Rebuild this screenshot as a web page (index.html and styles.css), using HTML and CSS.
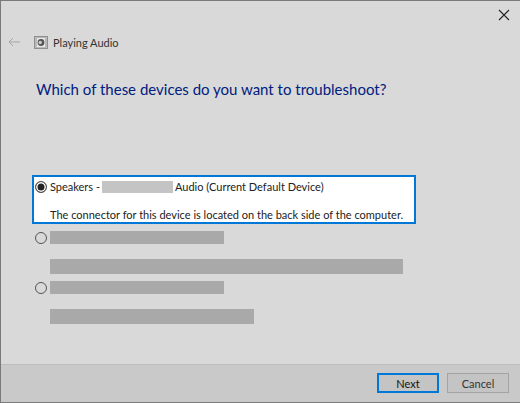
FILE: index.html
```html
<!DOCTYPE html>
<html lang="en">
<head>
    <meta charset="UTF-8">
    <title>Playing Audio</title>
    <link rel="stylesheet" href="styles.css">
</head>
<body>
    <div class="window">
        <div class="titlebar">
            <svg class="close" width="12" height="12" viewBox="0 0 12 12"><path d="M1 1L11 11M11 1L1 11" stroke="#222" stroke-width="1.1" fill="none"/></svg>
        </div>
        <div class="nav">
            <svg class="back" width="13" height="10" viewBox="0 0 13 10"><path d="M12 5H1M5 1L1 5L5 9" stroke="#a6a6a6" stroke-width="1" fill="none"/></svg>
            <svg class="app-icon" width="14" height="13" viewBox="0 0 14 13">
                <rect x="0.5" y="0.5" width="13" height="12" fill="#b9b9b9" stroke="#8f8f8f"/>
                <rect x="3" y="2" width="8" height="9" fill="#e6e6e6"/>
                <circle cx="7" cy="6.5" r="3.4" fill="#555"/>
                <circle cx="6.2" cy="6.5" r="1.7" fill="#c9c9c9"/>
            </svg>
            <span class="nav-title">Playing Audio</span>
        </div>
        <h1>Which of these devices do you want to troubleshoot?</h1>
        <div class="devices">
            <div class="device selected">
                <div class="device-line">
                    <span class="radio checked"></span>
                    <span>Speakers -</span>
                    <span class="mask-light"></span>
                    <span>Audio (Current Default Device)</span>
                </div>
                <p class="device-note">The connector for this device is located on the back side of the computer.</p>
            </div>
            <div class="device">
                <div class="device-line">
                    <span class="radio"></span>
                    <span class="mask name"></span>
                </div>
                <div class="mask note note-long"></div>
            </div>
            <div class="device">
                <div class="device-line">
                    <span class="radio"></span>
                    <span class="mask name"></span>
                </div>
                <div class="mask note note-short"></div>
            </div>
        </div>
        <div class="footer">
            <button class="button default">Next</button>
            <button class="button">Cancel</button>
        </div>
    </div>
</body>
</html>
```
FILE: styles.css
```css
html, body {
    height: 100%;
}
body {
    margin: 0;
    font-family: "Lato", "Open Sans", sans-serif;
    font-size: 11px;
    color: #222;
    background: #d9d9d9;
}
.window {
    box-sizing: border-box;
    height: 403px;
    display: flex;
    flex-direction: column;
    border: 1px solid #7a7a7a;
    border-width: 1px 0 1px 1px;
    background: #d9d9d9;
}
.titlebar {
    height: 28px;
    display: flex;
    justify-content: flex-end;
    align-items: center;
    padding: 0 10px 0 0;
    box-sizing: border-box;
}
.nav {
    height: 26px;
    display: flex;
    align-items: center;
    padding-left: 7px;
}
.back {
    margin-right: 13px;
}
.app-icon {
    margin-right: 5px;
}
.nav-title {
    color: #333;
}
h1 {
    margin: 24px 0 0 35px;
    font-size: 15px;
    line-height: 20px;
    font-weight: 400;
    color: #00207f;
}
.devices {
    margin: 76px 0 0 31px;
    display: flex;
    flex-direction: column;
    flex: 1;
}
.device {
    box-sizing: border-box;
    width: 384px;
    height: 50px;
    padding: 0 2px;
}
.device.selected {
    height: 49px;
    margin-bottom: 4px;
    background: #fff;
    border: 2px solid #0078d7;
    padding: 0;
}
.device-line {
    display: flex;
    align-items: center;
    gap: 2px;
    height: 19px;
}
.radio {
    box-sizing: border-box;
    width: 12px;
    height: 12px;
    margin: 0 1px;
    border: 1px solid #555;
    border-radius: 50%;
    background: #d9d9d9;
}
.radio.checked {
    background: #222;
    box-shadow: inset 0 0 0 1.5px #fff;
}
.mask-light {
    width: 71px;
    height: 12px;
    background: #c4c4c4;
}
.mask {
    background: #a9a9a9;
}
.name {
    width: 174px;
    height: 13px;
}
.note {
    height: 15px;
    margin: 12px 0 0 16px;
}
.note-long {
    width: 353px;
}
.note-short {
    width: 204px;
}
.device-note {
    margin: 11px 0 0 16px;
    line-height: 15px;
}
.footer {
    height: 38px;
    background: #c9c9c9;
    border-top: 1px solid #bdbdbd;
    display: flex;
    justify-content: flex-end;
    align-items: flex-start;
    gap: 8px;
    padding: 8px 11px 0 0;
    box-sizing: border-box;
}
.button {
    width: 62px;
    height: 20px;
    padding: 0;
    font-family: inherit;
    font-size: 11px;
    color: #333;
    background: #c4c4c4;
    border: 1px solid #a3a3a3;
}
.button.default {
    color: #111;
    border: 2px solid #0078d7;
}
```
